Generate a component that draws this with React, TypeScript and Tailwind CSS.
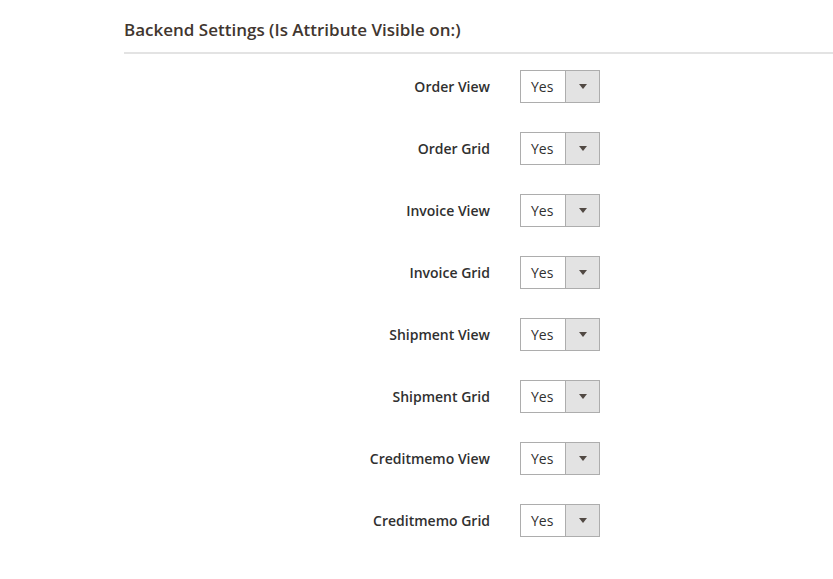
import React from "react";

const rows = [
  "Order View",
  "Order Grid",
  "Invoice View",
  "Invoice Grid",
  "Shipment View",
  "Shipment Grid",
  "Creditmemo View",
  "Creditmemo Grid",
];

function SelectBox() {
  return (
    <div className="flex h-[33px] w-[80px] border border-[#adadad] bg-white">
      <div className="flex flex-1 items-center pl-[10px] text-[14px] text-[#303030]">Yes</div>
      <div className="flex w-[34px] items-center justify-center border-l border-[#adadad] bg-[#e3e3e3]">
        <svg width="8" height="5" viewBox="0 0 8 5">
          <path d="M0 0 L8 0 L4 5 Z" fill="#514943" />
        </svg>
      </div>
    </div>
  );
}

export default function App() {
  return (
    <div
      className="min-h-[579px] w-[833px] bg-white"
      style={{ fontFamily: '"Open Sans", "Noto Sans", sans-serif' }}
    >
      <div className="pl-[124px]">
        <div className="border-b-2 border-[#e3e3e3] pb-[11px] pt-[19px]">
          <h2 className="text-[17px] font-semibold leading-[22px] text-[#41362f]">
            Backend Settings (Is Attribute Visible on:)
          </h2>
        </div>
        <div className="flex flex-col gap-[29px] pt-[16px]">
          {rows.map((r) => (
            <div key={r} className="flex items-center">
              <div className="w-[396px] pr-[30px] text-right text-[14px] font-semibold text-[#303030]">
                {r}
              </div>
              <SelectBox />
            </div>
          ))}
        </div>
      </div>
    </div>
  );
}
